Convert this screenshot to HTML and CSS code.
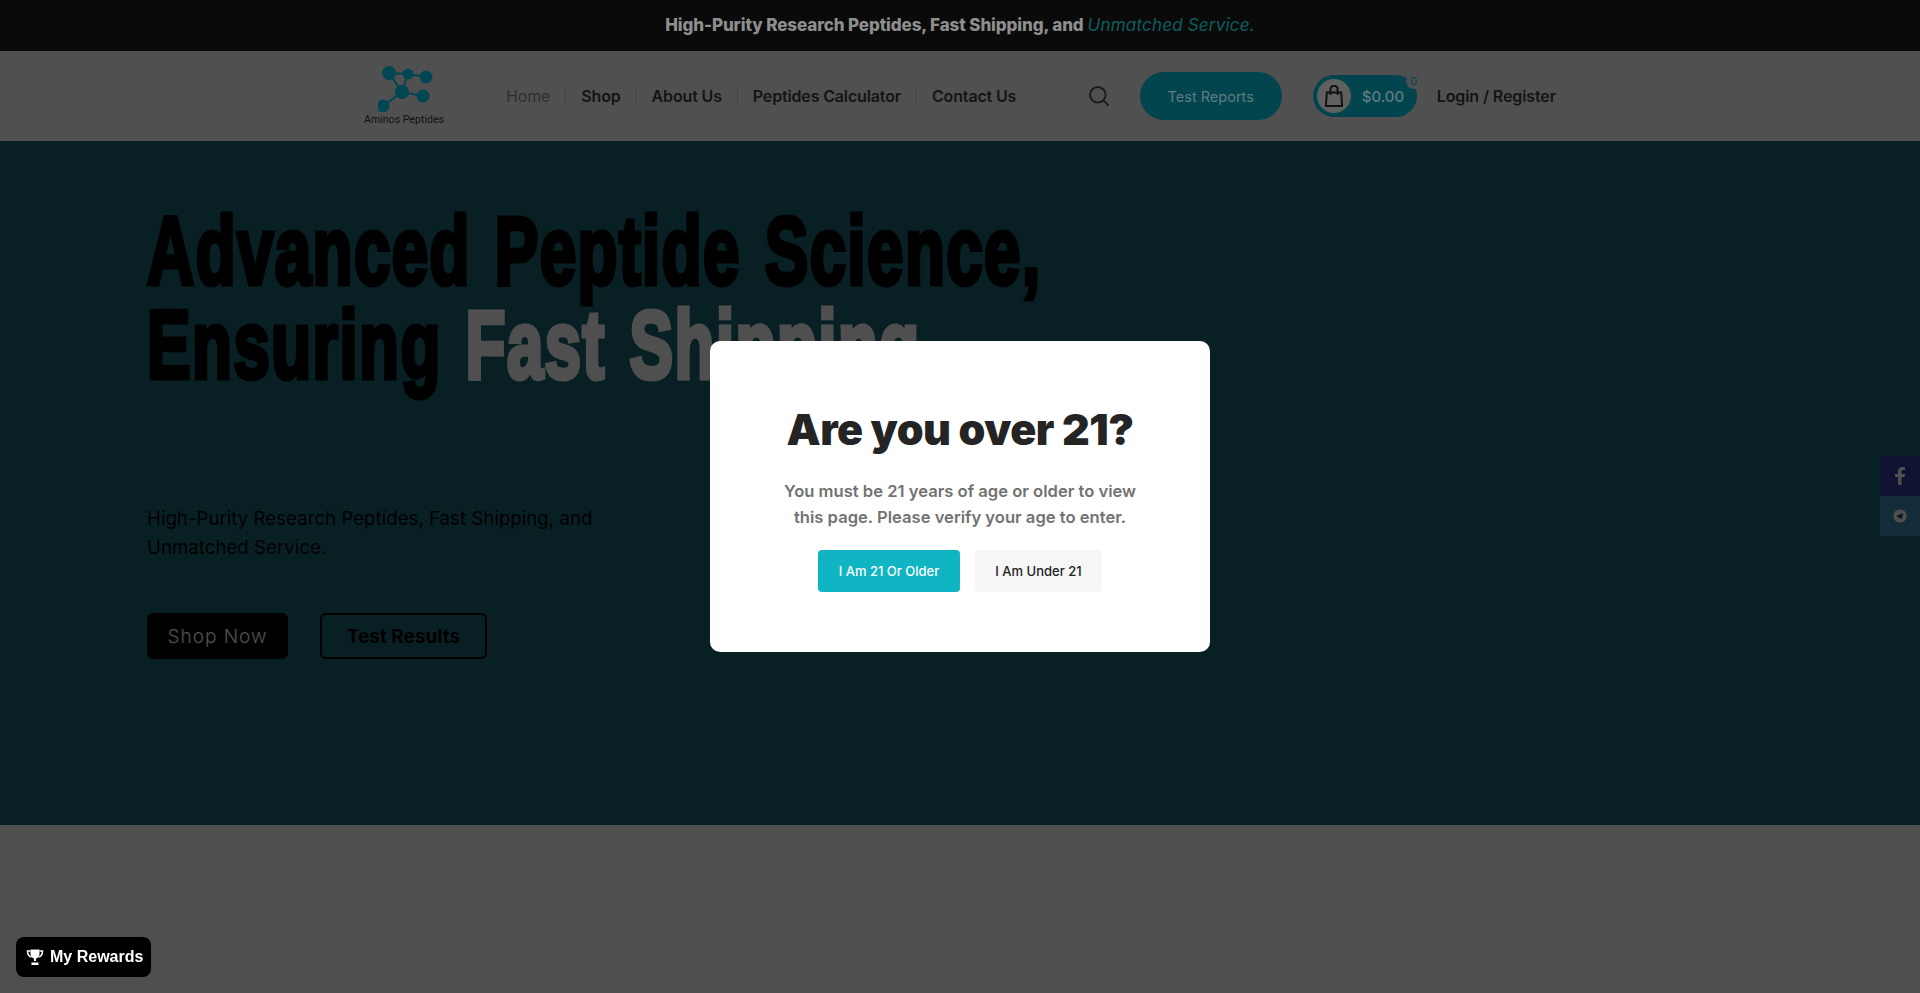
FILE: index.html
```html
<!DOCTYPE html>
<html lang="en">
<head>
<meta charset="utf-8">
<title>Aminos Peptides</title>
<link rel="stylesheet" href="styles.css">
</head>
<body>
<div class="top-stack">
  <div class="topbar">High-Purity Research Peptides, Fast Shipping, and <em>Unmatched Service.</em></div>
  <header class="header">
    <div class="header-inner">
      <a class="logo" href="#">
        <svg class="logo-mark" width="60" height="46" viewBox="0 0 60 46">
          <g stroke="#014653" stroke-width="2" fill="none">
            <path d="M11 7 30 8 48 11M11 7 24 26 30 8M24 26 45 30M24 26 5 40"/>
          </g>
          <g fill="#014653">
            <circle cx="11" cy="7" r="7"/><circle cx="30" cy="8" r="5.500"/><circle cx="48" cy="11" r="6.500"/>
            <circle cx="24" cy="26" r="7"/><circle cx="45" cy="30" r="6.500"/><circle cx="5" cy="40" r="6.500"/>
          </g>
        </svg>
        <span class="logo-text">Aminos Peptides</span>
      </a>
      <nav class="nav">
        <a class="nav-item active" href="#">Home</a>
        <a class="nav-item" href="#">Shop</a>
        <a class="nav-item" href="#">About Us</a>
        <a class="nav-item" href="#">Peptides Calculator</a>
        <a class="nav-item last" href="#">Contact Us</a>
      </nav>
      <div class="tools">
        <svg class="search" width="22" height="22" viewBox="0 0 22 22" fill="none" stroke="#1c1c1c" stroke-width="2"><circle cx="9.800" cy="9.800" r="7.800"/><path d="M15.600 15.600 20.600 20.600"/></svg>
        <a class="pill" href="#">Test Reports</a>
        <a class="cart" href="#">
          <span class="cart-icon">
            <svg width="20" height="24" viewBox="0 0 20 24" fill="none" stroke="#111" stroke-width="2.200"><path d="M2 8h16l1 15H1z"/><path d="M6 11V4.500a4 4 0 0 1 8 0V11"/></svg>
          </span>
          <span class="cart-sum">$0.00</span>
          <span class="cart-count">0</span>
        </a>
        <a class="login" href="#">Login / Register</a>
      </div>
    </div>
  </header>
</div>

<section class="hero">
  <h1 class="hero-title">Advanced Peptide Science,<br>Ensuring <span>Fast Shipping</span></h1>
  <p class="hero-text">High-Purity Research Peptides, Fast Shipping, and<br>Unmatched Service.</p>
  <div class="hero-actions">
    <a class="btn-solid" href="#">Shop Now</a>
    <a class="btn-outline" href="#">Test Results</a>
  </div>
</section>
<section class="below"></section>

<aside class="social">
  <a class="social-fb" href="#"><svg width="10" height="18" viewBox="0 0 10 18" fill="#fff"><path d="M3 18V10H0V7h3V4.500C3 1.600 4.800 0 7.300 0H10v3H8.200C7 3 6.500 3.600 6.500 4.700V7H10l-.5 3h-3v8z"/></svg></a>
  <a class="social-tg" href="#"><svg width="14" height="14" viewBox="0 0 16 16"><circle cx="8" cy="8" r="7.500" fill="#fff"/><path d="M3.500 8 11.500 4.500 10 12 7.500 9.800 6.500 11 6.200 9z" fill="#134a5e"/></svg></a>
</aside>

<div class="dim">
  <div class="modal">
    <h2 class="modal-title">Are you over 21?</h2>
    <p class="modal-text">You must be 21 years of age or older to view this page. Please verify your age to enter.</p>
    <div class="modal-actions">
      <button class="btn-yes">I Am 21 Or Older</button>
      <button class="btn-no">I Am Under 21</button>
    </div>
  </div>
</div>

<a class="rewards" href="#">
  <svg width="18" height="16" viewBox="0 0 18 16" fill="none"><path d="M4.500 2H1.500c0 3.500 1.500 5.500 4 6M13.500 2h3c0 3.500-1.500 5.500-4 6" stroke="#fff" stroke-width="1.500"/><path d="M4.500 .5h9v4c0 3-2 5-4.500 5s-4.500-2-4.500-5z" fill="#fff"/><path d="M8 9h2v3H8zM5.500 13.500h7V16h-7z" fill="#fff"/></svg>
  <span>My Rewards</span>
</a>
</body>
</html>
```
FILE: styles.css
```css
* { box-sizing: border-box; }
html, body { margin: 0; padding: 0; height: 100%; overflow: hidden; }
body { background: #fff; font-family: Inter, "Liberation Sans", sans-serif; color: #000; }
a { text-decoration: none; color: inherit; }

.top-stack { position: relative; z-index: 20; }
.topbar {
  height: 51px; background: #0a0a0a; color: #8e8e8e; padding-bottom: 2px;
  display: flex; align-items: center; justify-content: center; gap: 4px;
  font-size: 17px; font-weight: 800; letter-spacing: -.1px;
}
.topbar em { font-weight: 400; color: #0d5f5d; letter-spacing: .2px; }
.header { height: 90px; background: #505050; }
.header-inner { width: 1192px; height: 100%; margin: 0 auto; display: flex; align-items: center; }
.logo { width: 80px; display: flex; flex-direction: column; align-items: center; }
.logo-mark { display: block; margin-left: 8px; }
.logo-text { font-family: Roboto, sans-serif; font-size: 10.600px; line-height: 13px; color: #111; margin-top: 1px; white-space: nowrap; }
.nav { display: flex; align-items: center; margin-left: 47px; }
.nav-item {
  padding: 0 15px; font-size: 16px; font-weight: 600; letter-spacing: -.15px; color: #141414;
  border-right: 1px solid #464646; line-height: 20px;
}
.nav-item.active { color: #2f2f2f; font-weight: 400; }
.nav-item.last { border-right: 0; }
.tools { margin-left: auto; display: flex; align-items: center; }
.search { display: block; margin-right: 30px; }
.pill {
  width: 142px; height: 48px; border-radius: 24px; background: #02454f; color: #5f7c80;
  display: flex; align-items: center; justify-content: center; font-size: 14.500px; font-weight: 400;
}
.cart {
  position: relative; width: 104px; height: 42px; margin-left: 31px; border-radius: 21px; background: #02454f;
  display: flex; align-items: center; padding-left: 4px;
}
.cart-icon { width: 34px; height: 34px; border-radius: 50%; background: #606060; display: flex; align-items: center; justify-content: center; }
.cart-icon svg { width: 18px; height: 22px; }
.cart-sum { margin-left: 11px; font-size: 15px; font-weight: 500; color: #5f7c80; }
.cart-count {
  position: absolute; top: -2px; right: -5px; width: 16px; height: 16px; border-radius: 50%; background: #505050;
  font-size: 11px; line-height: 16px; text-align: center; color: #02454f;
}
.login { margin-left: 20px; font-size: 16px; font-weight: 600; color: #141414; white-space: nowrap; letter-spacing: -.1px; }

.hero { height: 684px; background: #1c6974; padding: 63px 0 0 147px; }
.hero-title {
  margin: 0; width: 1500px; white-space: nowrap; font-family: "Liberation Sans Narrow", "Liberation Sans", sans-serif; font-weight: 700;
  font-size: 96px; line-height: 94px; letter-spacing: 2.200px; word-spacing: 6px; color: #000;
  -webkit-text-stroke: 5px currentColor; transform: scaleX(.68); transform-origin: left top;
}
.hero-title span { color: #fff; }
.hero-text { margin: 112px 0 0; font-size: 18.700px; line-height: 29px; color: #000; }
.hero-actions { display: flex; gap: 32px; margin-top: 51px; }
.btn-solid, .btn-outline {
  height: 46px; border-radius: 6px; display: flex; align-items: center; justify-content: center; font-size: 19px;
}
.btn-solid { width: 141px; background: #000; color: #fff; font-weight: 300; letter-spacing: 1px; }
.btn-outline { width: 167px; border: 2px solid #000; color: #000; font-weight: 700; }
.below { height: 168px; background: #fff; }

.social { position: fixed; right: 0; top: 456px; width: 40px; display: flex; flex-direction: column; }
.social a { height: 40px; display: flex; align-items: center; justify-content: center; }
.social-fb { background: #363f9f; }
.social-tg { background: #3a93b8; }

.dim {
  position: fixed; inset: 0; z-index: 10; background: rgba(0,0,0,.69);
  display: flex; align-items: center; justify-content: center;
}
.modal {
  width: 500px; height: 311px; background: #fff; border-radius: 10px; padding: 62px 40px 0;
  display: flex; flex-direction: column; align-items: center; text-align: center;
}
.modal-title { margin: 0; font-size: 43px; line-height: 52px; font-weight: 900; color: #242424; letter-spacing: -.5px; white-space: nowrap; }
.modal-text { margin: 23px 0 0; width: 370px; font-size: 16.600px; line-height: 26px; font-weight: 600; color: #727272; }
.modal-actions { display: flex; gap: 15px; margin-top: 20px; }
.modal-actions button {
  height: 42px; border: 0; border-radius: 4px; font-family: Inter, sans-serif; font-size: 13px; font-weight: 500; padding: 0;
}
.btn-yes { width: 142px; background: #0fb5c2; color: #fff; }
.btn-no { width: 127px; background: #f6f6f6; color: #222; }

.rewards {
  position: fixed; z-index: 30; left: 16px; top: 937px; width: 135px; height: 40px; border-radius: 8px; background: #000; color: #fff;
  display: flex; align-items: center; gap: 6px; padding-left: 10px;
  font-family: "Liberation Sans", sans-serif; font-size: 16px; font-weight: 700;
}
```
